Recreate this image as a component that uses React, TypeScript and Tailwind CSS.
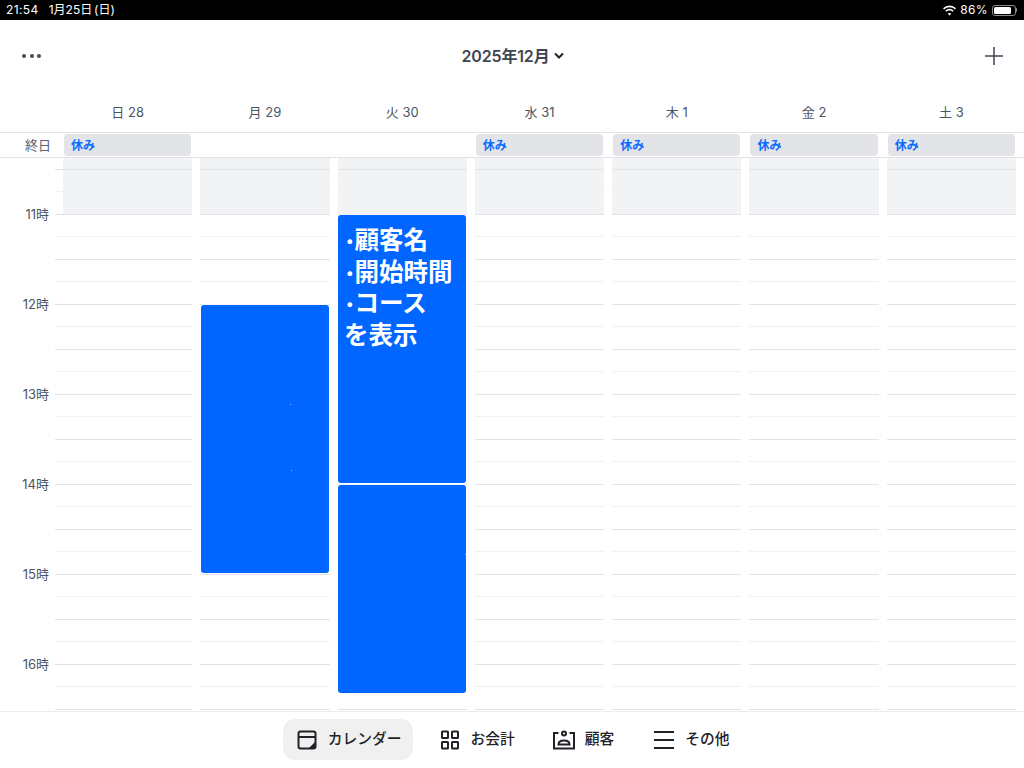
const font = { fontFamily: '"Inter", "Noto Sans CJK JP", sans-serif' };

const days = [
  { label: "日 28", off: true },
  { label: "月 29", off: false },
  { label: "火 30", off: false },
  { label: "水 31", off: true },
  { label: "木 1", off: true },
  { label: "金 2", off: true },
  { label: "土 3", off: true },
];

const hours = ["11時", "12時", "13時", "14時", "15時", "16時"];

// one row per quarter line, 10:15 up to 17:15
const rows = Array.from({ length: 25 }, (_, i) => i);

const GridLines = ({ shaded }: { shaded?: boolean }) => (
  <div className="flex flex-col">
    <div className={`h-[10.5px] ${shaded ? "bg-[#f2f3f5]" : ""}`}></div>
    {rows.map((r) => (
      <div
        key={r}
        className={`h-[22.5px] border-t ${r % 2 === 0 ? "border-[#e2e3e6]" : "border-[#f0f1f3]"} ${
          shaded && r < 2 ? "bg-[#f2f3f5]" : ""
        }`}
      ></div>
    ))}
  </div>
);

const CalendarIcon = () => (
  <svg width="20" height="20" viewBox="0 0 20 20" fill="none" stroke="#1f2328" strokeWidth="2">
    <rect x="1.500" y="1.500" width="17" height="17" rx="2" />
    <path d="M1.500 7h17" />
    <path d="M18 12l-6.500 6.500h7V12Z" fill="#1f2328" stroke="none" />
  </svg>
);

const GridIcon = () => (
  <svg width="20" height="20" viewBox="0 0 20 20" fill="none" stroke="#1f2328" strokeWidth="2">
    <rect x="2" y="1.500" width="6" height="6.500" rx="0.500" />
    <rect x="12" y="1.500" width="6" height="6.500" rx="0.500" />
    <rect x="2" y="12" width="6" height="6.500" rx="0.500" />
    <rect x="12" y="12" width="6" height="6.500" rx="0.500" />
  </svg>
);

const CustomerIcon = () => (
  <svg width="24" height="20" viewBox="0 0 24 20" fill="none" stroke="#1f2328" strokeWidth="2">
    <path d="M6.500 3H2v15.500h20V3h-4.500" />
    <circle cx="12" cy="3.500" r="2" />
    <path d="M6.500 14.500c0-3 2.500-4 5.500-4s5.500 1 5.500 4h-11Z" />
  </svg>
);

const MenuIcon = () => (
  <svg width="20" height="20" viewBox="0 0 20 20" fill="none" stroke="#1f2328" strokeWidth="2">
    <path d="M0 2h20M0 10h20M0 18h20" />
  </svg>
);

const WifiIcon = () => (
  <svg width="15" height="11" viewBox="0 0 15 11" fill="white">
    <path d="M7.500 2.200c2.100 0 4 .8 5.400 2.200l1.100-1.200A9.200 9.200 0 0 0 7.500.5 9.200 9.200 0 0 0 1 3.200l1.100 1.200a7.600 7.600 0 0 1 5.400-2.200Z" />
    <path d="M7.500 5.500c1.200 0 2.300.5 3.100 1.200l1.100-1.200a6.200 6.200 0 0 0-8.400 0l1.100 1.200c.8-.7 1.900-1.200 3.100-1.200Z" />
    <path d="M7.500 8c-.7 0-1.300.3-1.700.7l1.700 1.800 1.700-1.800c-.4-.4-1-.7-1.700-.7Z" />
  </svg>
);

const Speck = ({ className }: { className: string }) => (
  <div className={`absolute h-px w-px bg-[#8fbaff] ${className}`}></div>
);

const BulletLine = ({ text }: { text: string }) => (
  <div className="flex h-[31.5px] items-center">
    <span className="ml-[2px] w-[8.500px] text-[15px] leading-none">•</span>
    <span>{text}</span>
  </div>
);

export default function App() {
  return (
    <div className="flex h-[768px] w-[1024px] flex-col overflow-hidden bg-white" style={font}>
      {/* Status bar */}
      <div className="flex h-5 shrink-0 items-center justify-between bg-black pl-[6px] pr-[7px] text-[12px] text-white">
        <div className="flex gap-[10px]">
          <span className="tracking-[0.4px]">21:54</span>
          <span className="[word-spacing:-1.500px]">1月25日 (日)</span>
        </div>
        <div className="flex items-center gap-[4px]">
          <div className="mr-[-1px] flex">
            <WifiIcon />
          </div>
          <span className="tracking-[0.4px]">86%</span>
          <div className="flex items-center">
            <div className="h-[11px] w-[24px] rounded-[3px] border border-[#8a8a8a] p-px">
              <div className="h-full w-[84%] rounded-[1.500px] bg-white"></div>
            </div>
            <div className="h-[4px] w-px rounded-r bg-[#8a8a8a]"></div>
          </div>
        </div>
      </div>

      {/* Title row */}
      <div className="flex h-[72px] shrink-0 items-center justify-between pl-[22px] pr-[20px]">
        <div className="flex gap-[3.500px]">
          <div className="h-1 w-1 rounded-full bg-[#474d57]"></div>
          <div className="h-1 w-1 rounded-full bg-[#474d57]"></div>
          <div className="h-1 w-1 rounded-full bg-[#474d57]"></div>
        </div>
        <div className="flex items-center gap-[4px] text-[16px] font-semibold tracking-[-0.15px] text-[#3f4650]">
          <span>2025年12月</span>
          <svg width="10" height="8" viewBox="0 0 10 8" fill="none" stroke="#1f2328" strokeWidth="2">
            <path d="M1 1.500l4 4 4-4" />
          </svg>
        </div>
        <svg width="20" height="20" viewBox="0 0 20 20" fill="none" stroke="#3f4650" strokeWidth="1.500">
          <path d="M10 1v18M1 10h18" />
        </svg>
      </div>

      {/* Weekday header */}
      <div className="flex h-[41px] shrink-0 border-b border-[#e2e3e6] pl-[59px] pr-[4px]">
        <div className="grid flex-1 grid-cols-7">
          {days.map((d) => (
            <div key={d.label} className="pt-[10px] text-center text-[13px] leading-[20px] text-[#4b5563]">
              {d.label}
            </div>
          ))}
        </div>
      </div>

      {/* All day row */}
      <div className="flex h-[25px] shrink-0 border-b border-[#e2e3e6]">
        <div className="w-[51px] shrink-0 text-right text-[13px] leading-[25px] text-[#5b616b]">終日</div>
        <div className="ml-[13px] grid flex-1 grid-cols-7 gap-x-[10px] pr-[9px]">
          {days.map((d) => (
            <div key={d.label}>
              {d.off && (
                <div className="mt-px h-[22px] rounded-[4px] bg-[#e3e4e8] pl-[7px] pt-px text-[12px] font-semibold leading-[22px] text-[#0a6cff]">
                  休み
                </div>
              )}
            </div>
          ))}
        </div>
      </div>

      {/* Time grid */}
      <div className="flex min-h-0 flex-1 overflow-hidden border-b border-[#eceded]">
        <div className="flex w-[55px] shrink-0 flex-col pr-[6px] text-right text-[13px] leading-[18px] text-[#4b5563]">
          <div className="h-[47px] shrink-0"></div>
          {hours.map((h) => (
            <div key={h} className="h-[90px] shrink-0">
              {h}
            </div>
          ))}
        </div>
        <div className="w-2 shrink-0">
          <GridLines />
        </div>
        <div className="grid flex-1 grid-cols-7 gap-x-2 pr-2">
          {days.map((d, i) => (
            <div key={d.label} className="relative">
              <GridLines shaded />
              {i === 1 && (
                <div className="absolute left-px right-px top-[147px] h-[268px] rounded-[3px] bg-[#0066ff] ring-1 ring-white/60">
                  <Speck className="left-[89px] top-[99px]" />
                  <Speck className="left-[90px] top-[165px]" />
                </div>
              )}
              {i === 2 && (
                <>
                  <div className="absolute left-[0.500px] right-px top-[57px] h-[268px] rounded-[3px] bg-[#0066ff] pl-[6px] pt-[10px] text-[24.500px] font-semibold leading-[31.500px] text-white ring-1 ring-white/60">
                    <BulletLine text="顧客名" />
                    <BulletLine text="開始時間" />
                    <BulletLine text="コース" />
                    <div>を表示</div>
                  </div>
                  <div className="absolute left-[0.500px] right-px top-[327px] h-[208px] rounded-[3px] bg-[#0066ff] ring-1 ring-white/60">
                    <Speck className="right-0 top-[69px]" />
                  </div>
                </>
              )}
            </div>
          ))}
        </div>
      </div>

      {/* Bottom tabs */}
      <div className="flex h-[56px] shrink-0 items-start justify-center pr-[12px] pt-[7px] text-[14.750px] font-medium text-[#1f2328]">
        <div className="flex h-[41px] items-center gap-[11px] rounded-[12px] bg-[#f0f0f0] pl-[14px] pr-[12px]">
          <CalendarIcon />
          <span>カレンダー</span>
        </div>
        <div className="ml-[27px] flex h-[41px] items-center gap-[10px]">
          <GridIcon />
          <span>お会計</span>
        </div>
        <div className="ml-[37px] flex h-[41px] items-center gap-[9px]">
          <CustomerIcon />
          <span>顧客</span>
        </div>
        <div className="ml-[40px] flex h-[41px] items-center gap-[11px]">
          <MenuIcon />
          <span>その他</span>
        </div>
      </div>
    </div>
  );
}
